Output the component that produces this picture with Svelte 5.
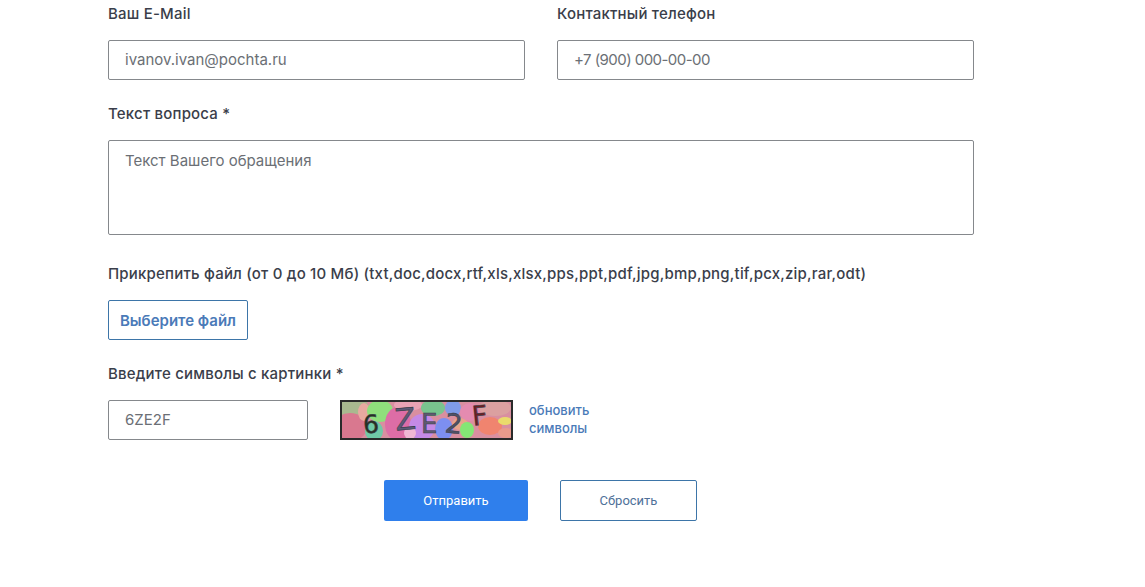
<script lang="ts">
  const formats = "txt,doc,docx,rtf,xls,xlsx,pps,ppt,pdf,jpg,bmp,png,tif,pcx,zip,rar,odt";

  const blobs = [
    { x: 8, y: 6, rx: 20, ry: 10, fill: "#a9b98f" },
    { x: 10, y: 27, rx: 17, ry: 14, fill: "#d9788f" },
    { x: 24, y: 12, rx: 6, ry: 9, fill: "#e8a9a0" },
    { x: 40, y: 11, rx: 13, ry: 11, fill: "#8fdf7c" },
    { x: 34, y: 31, rx: 9, ry: 10, fill: "#70c9a6" },
    { x: 58, y: 24, rx: 13, ry: 17, fill: "#dd6da6" },
    { x: 68, y: 5, rx: 14, ry: 6, fill: "#e9a3b5" },
    { x: 82, y: 27, rx: 13, ry: 13, fill: "#c58ae6" },
    { x: 70, y: 33, rx: 6, ry: 6, fill: "#f0b7d4" },
    { x: 93, y: 8, rx: 12, ry: 8, fill: "#79c48e" },
    { x: 104, y: 29, rx: 9, ry: 11, fill: "#7d8ff0" },
    { x: 113, y: 8, rx: 8, ry: 8, fill: "#7f9be8" },
    { x: 120, y: 24, rx: 8, ry: 6, fill: "#e8a58c" },
    { x: 130, y: 12, rx: 10, ry: 9, fill: "#e48bb0" },
    { x: 127, y: 30, rx: 7, ry: 8, fill: "#84e675" },
    { x: 150, y: 26, rx: 12, ry: 9, fill: "#f0846f" },
    { x: 155, y: 8, rx: 16, ry: 8, fill: "#dba0a0" },
    { x: 165, y: 21, rx: 7, ry: 4, fill: "#eadb6c" },
    { x: 166, y: 33, rx: 8, ry: 5, fill: "#e99a8b" },
  ];
</script>

<main class="form">
  <div class="two-cols">
    <div class="field">
      <span class="label">Ваш E-Mail</span>
      <div class="input">ivanov.ivan@pochta.ru</div>
    </div>
    <div class="field">
      <span class="label">Контактный телефон</span>
      <div class="input phone">+7 (900) 000-00-00</div>
    </div>
  </div>

  <div class="field">
    <span class="label">Текст вопроса *</span>
    <div class="input area">Текст Вашего обращения</div>
  </div>

  <div class="field">
    <span class="label">Прикрепить файл (от 0 до 10 Мб) ({formats})</span>
    <button class="file-btn">Выберите файл</button>
  </div>

  <div class="field">
    <span class="label">Введите символы с картинки *</span>
    <div class="captcha-row">
      <div class="input code">6ZE2F</div>
      <svg class="captcha" width="173" height="40" viewBox="0 0 173 40">
        <rect width="173" height="40" fill="#d98fa0" />
        {#each blobs as b}
          <ellipse cx={b.x} cy={b.y} rx={b.rx} ry={b.ry} fill={b.fill} />
        {/each}
        <text x="23" y="33" font-size="25" fill="#26301f" transform="rotate(-3 30 25)">6</text>
        <text x="55" y="30" font-size="30" fill="#5d5a78" transform="rotate(-5 60 20)">Z</text>
        <text x="81" y="33" font-size="26" fill="#5f5a70">E</text>
        <text x="105" y="33" font-size="27" fill="#4f5168" transform="rotate(6 112 25)">2</text>
        <text x="132" y="25" font-size="27" fill="#6e1f22" transform="rotate(-6 140 15)">F</text>
        <rect x="1" y="1" width="171" height="38" fill="none" stroke="#2a2a2a" stroke-width="2" />
      </svg>
      <div class="refresh">обновить<br />символы</div>
    </div>
  </div>

  <div class="actions">
    <button class="submit">Отправить</button>
    <button class="reset">Сбросить</button>
  </div>
</main>

<style>
  :global(body) {
    background: #fff;
  }

  .form {
    box-sizing: border-box;
    width: 866px;
    height: 587px;
    margin-left: 108px;
    font-family: Inter, "Noto Sans", sans-serif;
    color: #3a3e4a;
  }

  .two-cols {
    display: grid;
    grid-template-columns: 417px 417px;
    column-gap: 32px;
  }

  .field {
    display: flex;
    flex-direction: column;
    align-items: flex-start;
    margin-bottom: 20px;
  }

  .label {
    height: 28px;
    line-height: 28px;
    margin-bottom: 12px;
    font-size: 15px;
    font-weight: 500;
    letter-spacing: 0.2px;
    white-space: nowrap;
  }

  .input {
    box-sizing: border-box;
    width: 100%;
    height: 40px;
    padding: 0 16px;
    border: 1px solid #85888c;
    border-radius: 2px;
    font-size: 15px;
    line-height: 37px;
    color: #6b6f75;
  }

  .phone {
    letter-spacing: -0.55px;
  }

  .area {
    height: 95px;
    line-height: 39px;
    margin-bottom: 5px;
  }

  .file-btn {
    box-sizing: border-box;
    width: 140px;
    height: 40px;
    padding: 0;
    background: #fff;
    border: 1px solid #3d75a8;
    border-radius: 2px;
    font: 600 15px Inter, sans-serif;
    color: #4a7ab8;
  }

  .captcha-row {
    display: flex;
    align-items: flex-start;
  }

  .code {
    width: 200px;
  }

  .captcha {
    display: block;
    margin-left: 32px;
  }

  .captcha text {
    font-family: "DejaVu Sans", sans-serif;
    stroke: currentColor;
    stroke-width: 0.6;
  }

  .refresh {
    margin: 1px 0 0 16px;
    font-size: 13px;
    font-weight: 500;
    line-height: 18px;
    color: #4a7ab8;
  }

  .actions {
    display: flex;
    gap: 32px;
    margin: 40px 0 0 276px;
  }

  .actions button {
    box-sizing: border-box;
    height: 41px;
    padding: 0;
    border-radius: 2px;
    font: 400 13px Roboto, sans-serif;
  }

  .submit {
    width: 144px;
    background: #2f7fec;
    border: 0;
    color: #fff;
  }

  .reset {
    width: 137px;
    background: #fff;
    border: 1px solid #3d75a8;
    color: #4f7199;
  }
</style>
